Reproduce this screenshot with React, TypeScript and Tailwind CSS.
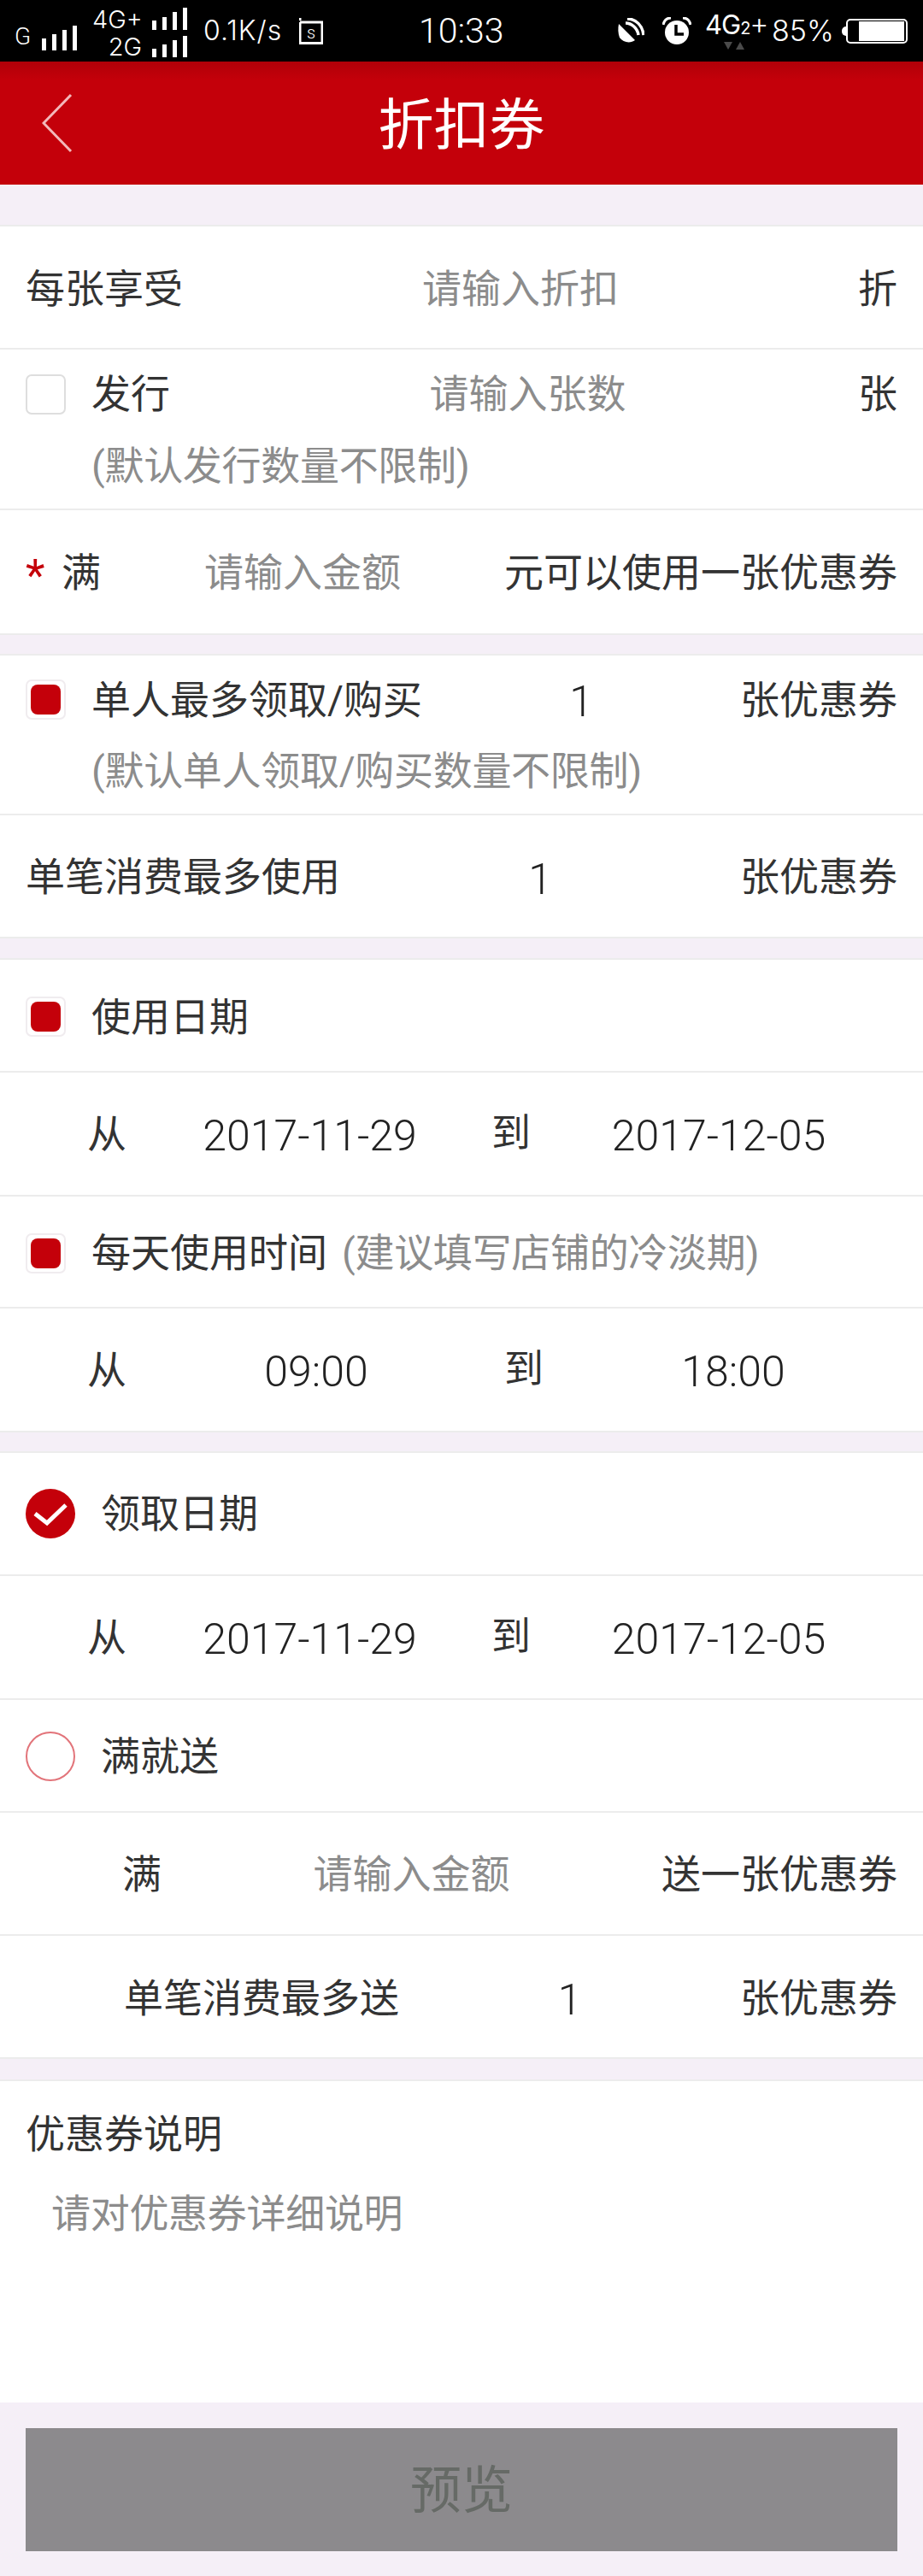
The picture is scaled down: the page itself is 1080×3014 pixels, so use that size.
import React from 'react';

const RED = '#c4000a';

function Bars({ tops, h }: { tops: number[]; h: number }) {
  return (
    <svg width="41" height={h} className="block">
      {tops.map((t, i) => (
        <rect key={i} x={i * 12} y={t} width="5" height={h - t} fill="#fff" />
      ))}
    </svg>
  );
}

function StatusBar() {
  return (
    <div className="h-[72px] bg-black text-white flex items-center font-['Inter','Roboto',sans-serif] font-light overflow-hidden whitespace-nowrap">
      <span className="ml-[17px] w-[19px] text-[28px] leading-none mt-[14px] font-['Roboto',sans-serif]">G</span>
      <div className="ml-[13px] mt-[17px]"><Bars tops={[15, 10, 5, 0]} h={29} /></div>
      <div className="ml-[18px] flex flex-col items-end gap-[7px] mt-[3px]">
        <div className="flex items-end gap-[12px]">
          <span className="w-[58px] text-right text-[29px] leading-[24px]">4G+</span>
          <Bars tops={[15, 11, 5, 0]} h={26} />
        </div>
        <div className="flex items-end gap-[12px]">
          <span className="w-[58px] text-right text-[29px] leading-[24px]">2G</span>
          <Bars tops={[15, 10, 5, 0]} h={25} />
        </div>
      </div>
      <span className="ml-[19px] w-[100px] text-[32px] leading-none tracking-[1px]">0.1K/s</span>
      <svg width="28" height="31" viewBox="0 0 28 31" className="ml-[12px] mt-[1px]">
        <path d="M1 0V3M1 5H27V29.500H1V5" fill="none" stroke="#fff" strokeWidth="3" />
        <text x="14" y="24" fontSize="20" fill="#fff" textAnchor="middle" fontFamily="Roboto">s</text>
      </svg>
      <span className="ml-[112px] w-[100px] text-[41px] leading-none font-['Roboto',sans-serif]">10:33</span>
      <svg width="31" height="30" viewBox="0 0 31 30" className="ml-[133px]">
        <path d="M1 8L20 27C15 31 6 30 2 24C0 19 0 13 1 8Z" fill="#fff" transform="translate(0 -1)" />
        <path d="M9 6C16 6 23 12 24 20M11 1C21 1 29 9 30 20" fill="none" stroke="#fff" strokeWidth="3.500" />
      </svg>
      <svg width="34" height="32" viewBox="0 0 34 32" className="ml-[21px]">
        <circle cx="17" cy="18" r="14" fill="#fff" />
        <path d="M16 9V20H25" fill="none" stroke="#000" strokeWidth="3.500" />
        <path d="M1 9C2 4 5 1 10 1M33 9C32 4 29 1 24 1" fill="none" stroke="#fff" strokeWidth="3" />
      </svg>
      <div className="ml-[16px] w-[68px] flex flex-col items-start">
        <span className="flex items-baseline text-[31px] leading-[26px] font-normal tracking-[-1px]">
          4G<span className="text-[20px]">2</span><span className="text-[34px] font-light">+</span>
        </span>
        <svg width="28" height="9" className="ml-[22px] mt-[3px]">
          <path d="M0 0H10L5 9Z" fill="#4a4a4a" />
          <path d="M14 9H24L19 0Z" fill="#4a4a4a" />
        </svg>
      </div>
      <span className="ml-[10px] w-[72px] text-[34px] leading-none">85%</span>
      <div className="ml-[10px] w-[5px] h-[11px] bg-white rounded-l-full" />
      <div className="w-[72px] h-[29px] border-2 border-white rounded-[5px] flex justify-end pr-[2px] py-[1px] box-border">
        <div className="w-[53px] bg-white" />
      </div>
    </div>
  );
}

function Header() {
  return (
    <div className="h-[144px] bg-[#c4000a] bg-[linear-gradient(#b00008,#c4000a_22px)] grid grid-cols-[1fr_auto_1fr] items-center text-white">
      <svg width="36" height="70" viewBox="0 0 36 70" className="ml-[49px]">
        <path d="M34 2L2 35L34 68" fill="none" stroke="#f3b8bb" strokeWidth="3" />
      </svg>
      <div className="text-[65px] leading-none mt-[6px]">折扣券</div>
      <div />
    </div>
  );
}

function CheckBox({ on }: { on?: boolean }) {
  return (
    <div className={`w-[47px] h-[47px] shrink-0 rounded-[7px] border-2 flex items-center justify-center ${on ? 'border-[#f0ecef] bg-white' : 'border-[#dedede] bg-white'}`}>
      {on && <div className="w-[35px] h-[35px] rounded-[8px] bg-[#c4000a]" />}
    </div>
  );
}

function Radio({ on }: { on?: boolean }) {
  if (!on) return <div className="w-[58px] h-[58px] shrink-0 rounded-full border-2 border-[#e2747a] bg-white" />;
  return (
    <svg width="58" height="58" viewBox="0 0 58 58" className="shrink-0">
      <circle cx="29" cy="29" r="29" fill={RED} />
      <path d="M11 29L25 40L47 19" fill="none" stroke="#fff" strokeWidth="5" />
    </svg>
  );
}

function Row({ h, className = '', children }: { h: number; className?: string; children: React.ReactNode }) {
  // h comes from the row table below, it never changes at runtime
  return (
    <div style={{ height: h }} className={`bg-white border-b-2 border-[#ececec] flex items-center box-border ${className}`}>
      {children}
    </div>
  );
}

const Gap = ({ h }: { h: number }) => <div style={{ height: h }} className="bg-[#f5eff7] border-b-2 border-[#ececec] box-border" />;

const Field = ({ text, value }: { text?: string; value?: string }) => (
  <div className={`flex-1 text-center ${value ? 'text-[#222] text-[50px] font-light mt-[5px]' : 'text-[#8c8c8c]'}`}>{value ?? text}</div>
);

function DateRow({ h, a, b, time, narrow }: { h: number; a: string; b: string; time?: boolean; narrow?: boolean }) {
  return (
    <Row h={h} className={narrow ? 'bg-[#f5eff7] items-stretch' : ''}>
      <div className={`grid items-center bg-white pl-[102px] h-full ${time ? 'grid-cols-[46px_444px_44px_444px]' : 'grid-cols-[46px_429px_44px_440px]'} ${narrow ? 'w-[1050px]' : 'w-full'}`}>
        <span>从</span>
        <Field value={a} />
        <span className="-mt-[3px] -ml-[2px]">到</span>
        <Field value={b} />
      </div>
    </Row>
  );
}

export default function App() {
  return (
    <div className="w-[1080px] h-[3014px] bg-[#f5eff7] text-[46px] text-[#333] font-['Roboto','Noto_Sans_CJK_SC',sans-serif] leading-[60px] overflow-hidden">
      <StatusBar />
      <Header />
      <Gap h={49} />

      <Row h={144} className="px-[30px] pt-[3px]">
        <span>每张享受</span>
        <Field text="请输入折扣" />
        <span>折</span>
      </Row>

      <Row h={188} className="flex-col !items-stretch px-[30px] pt-[22px]">
        <div className="flex items-center">
          <CheckBox />
          <span className="ml-[30px]">发行</span>
          <div className="flex-1 flex pl-[32px]"><Field text="请输入张数" /></div>
          <span>张</span>
        </div>
        <div className="ml-[77px] mt-[24px] text-[#8c8c8c] tracking-[-0.3px]">(默认发行数量不限制)</div>
      </Row>

      <Row h={146} className="px-[30px] pt-[2px]">
        <span className="text-[#c4000a] w-[42px] text-[52px] mt-[8px]">*</span>
        <span>满</span>
        <Field text="请输入金额" />
        <span>元可以使用一张优惠券</span>
      </Row>
      <Gap h={24} />

      <Row h={187} className="flex-col !items-stretch px-[30px] pt-[19px]">
        <div className="flex items-center">
          <CheckBox on />
          <span className="ml-[30px]">单人最多领取/购买</span>
          <Field value="1" />
          <span>张优惠券</span>
        </div>
        <div className="ml-[77px] mt-[21px] text-[#8c8c8c] tracking-[-0.3px]">(默认单人领取/购买数量不限制)</div>
      </Row>

      <Row h={144} className="px-[30px] pt-[2px]">
        <span>单笔消费最多使用</span>
        <Field value="1" />
        <span>张优惠券</span>
      </Row>
      <Gap h={25} />

      <Row h={132} className="px-[30px] pt-[3px]">
        <CheckBox on />
        <span className="ml-[30px]">使用日期</span>
      </Row>
      <DateRow h={145} a="2017-11-29" b="2017-12-05" narrow />
      <Row h={131} className="px-[30px] pt-[3px]">
        <CheckBox on />
        <span className="ml-[30px]">每天使用时间</span>
        <span className="ml-[17px] text-[#8c8c8c] tracking-[-0.3px]">(建议填写店铺的冷淡期)</span>
      </Row>
      <DateRow h={145} a="09:00" b="18:00" time />
      <Gap h={24} />

      <Row h={144} className="px-[30px]">
        <Radio on />
        <span className="ml-[30px]">领取日期</span>
      </Row>
      <DateRow h={145} a="2017-11-29" b="2017-12-05" />
      <Row h={132} className="px-[30px] pt-[1px]">
        <Radio />
        <span className="ml-[30px]">满就送</span>
      </Row>
      <Row h={144} className="pl-[143px] pr-[30px] pt-[2px]">
        <span>满</span>
        <Field text="请输入金额" />
        <span>送一张优惠券</span>
      </Row>
      <Row h={144} className="pl-[145px] pr-[30px] pt-[3px]">
        <span>单笔消费最多送</span>
        <Field value="1" />
        <span>张优惠券</span>
      </Row>
      <Gap h={26} />

      <div className="h-[376px] bg-white px-[30px] pt-[32px]">
        <div>优惠券说明</div>
        <div className="ml-[30px] mt-[33px] text-[#8c8c8c] tracking-[-0.3px]">请对优惠券详细说明</div>
      </div>

      <div className="px-[30px] pt-[30px]">
        <button className="w-[1020px] h-[144px] bg-[#8c8a8d] text-[#666a66] text-[60px] pt-[4px]">预览</button>
      </div>
    </div>
  );
}
